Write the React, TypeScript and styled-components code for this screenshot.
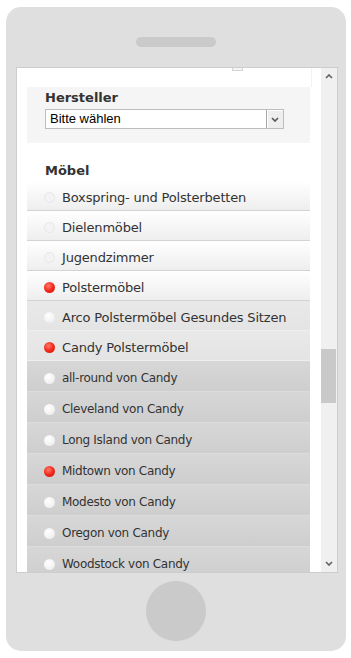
import styled, { createGlobalStyle, css } from 'styled-components';

/* ─── Data ─────────────────────────────────────── */

type Tone = 'light' | 'mid' | 'sub';
type DotKind = 'faint' | 'plain' | 'active';

interface Category {
  label: string;
  tone: Tone;
  dot: DotKind;
}

const CATEGORIES: Category[] = [
  { label: 'Boxspring- und Polsterbetten', tone: 'light', dot: 'faint' },
  { label: 'Dielenmöbel', tone: 'light', dot: 'faint' },
  { label: 'Jugendzimmer', tone: 'light', dot: 'faint' },
  { label: 'Polstermöbel', tone: 'light', dot: 'active' },
  { label: 'Arco Polstermöbel Gesundes Sitzen', tone: 'mid', dot: 'plain' },
  { label: 'Candy Polstermöbel', tone: 'mid', dot: 'active' },
  { label: 'all-round von Candy', tone: 'sub', dot: 'plain' },
  { label: 'Cleveland von Candy', tone: 'sub', dot: 'plain' },
  { label: 'Long Island von Candy', tone: 'sub', dot: 'plain' },
  { label: 'Midtown von Candy', tone: 'sub', dot: 'active' },
  { label: 'Modesto von Candy', tone: 'sub', dot: 'plain' },
  { label: 'Oregon von Candy', tone: 'sub', dot: 'plain' },
  { label: 'Woodstock von Candy', tone: 'sub', dot: 'plain' },
];

const THUMB_OFFSET = 264;

/* ─── Styled components ───────────────────────── */

const GlobalStyle = createGlobalStyle`
  html, body {
    margin: 0;
    padding: 0;
    background: #ffffff;
  }
  body {
    font-family: "DejaVu Sans", Verdana, sans-serif;
    color: #333333;
  }
`;

const Phone = styled.div`
  box-sizing: border-box;
  width: 340px;
  height: 644px;
  margin: 7px 0 0 6px;
  padding-top: 30px;
  background: #dfdfdf;
  border-radius: 15px;
  display: flex;
  flex-direction: column;
  align-items: center;
`;

const Speaker = styled.div`
  width: 80px;
  height: 10px;
  border-radius: 5px;
  background: #cacaca;
`;

const Screen = styled.div`
  box-sizing: border-box;
  align-self: flex-start;
  margin: 20px 0 0 10px;
  width: 322px;
  height: 506px;
  border: 1px solid #cdcdcd;
  background: #ffffff;
  display: flex;
`;

const Viewport = styled.div`
  flex: 1;
  min-width: 0;
  overflow: hidden;
  padding: 0 11px 0 10px;
`;

const Column = styled.div`
  display: flex;
  flex-direction: column;
`;

const TopStrip = styled.div`
  height: 19px;
  margin-right: -2px;
  border-right: 1px solid #f3f3f3;
`;

const TabEdge = styled.div`
  box-sizing: border-box;
  width: 11px;
  height: 3px;
  margin-left: 205px;
  background: #f4f4f4;
  border: 1px solid #d4d4d4;
  border-top: none;
`;

const FilterBox = styled.div`
  height: 56px;
  box-sizing: border-box;
  padding: 3px 18px 0;
  background: #f5f5f5;
`;

const Heading = styled.div`
  font-weight: bold;
  font-size: 13px;
  line-height: 16px;
  color: #333333;
`;

const SectionHeading = styled(Heading)`
  padding: 20px 18px 2px;
`;

const Select = styled.div`
  box-sizing: border-box;
  margin-top: 3px;
  width: 239px;
  height: 20px;
  display: flex;
  align-items: stretch;
  background: #ffffff;
  border: 1px solid #bdbdbd;
`;

const SelectValue = styled.div`
  flex: 1;
  padding-left: 4px;
  font-family: "Liberation Sans", Arial, sans-serif;
  font-size: 13px;
  line-height: 18px;
  color: #000000;
`;

const SelectButton = styled.div`
  width: 16px;
  display: flex;
  align-items: center;
  justify-content: center;
  background: #eeeeee;
  border-left: 1px solid #a8a8a8;
  box-shadow: inset 1px 1px 0 #ffffff;
`;

const toneStyles: Record<Tone, ReturnType<typeof css>> = {
  light: css`
    height: 30px;
    background: linear-gradient(#ffffff, #eeeeee);
    border-bottom: 1px solid #d3d3d3;
  `,
  mid: css`
    height: 30px;
    background: linear-gradient(#e9e9e9, #e4e4e4);
    border-bottom: 1px solid #eeeeee;
  `,
  sub: css`
    height: 31px;
    background: linear-gradient(#d7d7d7, #cecece);
    border-bottom: 1px solid #dcdcdc;
  `,
};

const Row = styled.div<{ $tone: Tone }>`
  box-sizing: border-box;
  display: flex;
  align-items: center;
  gap: 7px;
  padding: 4px 0 0 17px;
  ${({ $tone }) => toneStyles[$tone]}
`;

const dotStyles: Record<DotKind, ReturnType<typeof css>> = {
  faint: css`
    background: #f3f3f3;
    border: 1px solid #e7e7e7;
  `,
  plain: css`
    background: radial-gradient(circle at 40% 35%, #ffffff, #f3f3f3 55%, #e6e6e6);
  `,
  active: css`
    background: radial-gradient(circle at 40% 35%, #ff7a6a, #f22a1c 50%, #c81408);
  `,
};

const Dot = styled.span<{ $kind: DotKind }>`
  box-sizing: border-box;
  width: 11px;
  height: 11px;
  border-radius: 50%;
  flex-shrink: 0;
  ${({ $kind }) => dotStyles[$kind]}
`;

const Label = styled.span<{ $small: boolean }>`
  font-size: ${({ $small }) => ($small ? '12px' : '13px')};
  letter-spacing: ${({ $small }) => ($small ? '-0.3px' : '-0.18px')};
  line-height: 15px;
  color: #333333;
  white-space: nowrap;
`;

const Scrollbar = styled.div`
  width: 16px;
  display: flex;
  flex-direction: column;
  background: #f0f0f0;
`;

const ScrollArrow = styled.div`
  height: 17px;
  display: flex;
  align-items: center;
  justify-content: center;
`;

const Track = styled.div`
  flex: 1;
`;

const Thumb = styled.div`
  width: 15px;
  height: 54px;
  background: #c9c9c9;
`;

const HomeButton = styled.div`
  margin-top: 8px;
  width: 60px;
  height: 60px;
  border-radius: 50%;
  background: #cacaca;
`;

/* ─── Icons ────────────────────────────────────── */

function Chevron({ up, color = '#606060' }: { up?: boolean; color?: string }) {
  return (
    <svg width="8" height="5" viewBox="0 0 8 5">
      <path
        d={up ? 'M1 4 L4 1 L7 4' : 'M1 1 L4 4 L7 1'}
        fill="none"
        stroke={color}
        strokeWidth="1.6"
      />
    </svg>
  );
}

/* ─── App ─────────────────────────────────────── */

export default function App() {
  return (
    <>
      <GlobalStyle />
      <Phone>
        <Speaker />
        <Screen>
          <Viewport>
            <Column>
              <TopStrip>
                <TabEdge />
              </TopStrip>
              <FilterBox>
                <Heading>Hersteller</Heading>
                <Select>
                  <SelectValue>Bitte wählen</SelectValue>
                  <SelectButton>
                    <Chevron color="#555" />
                  </SelectButton>
                </Select>
              </FilterBox>
              <SectionHeading>Möbel</SectionHeading>
              {CATEGORIES.map(cat => (
                <Row key={cat.label} $tone={cat.tone}>
                  <Dot $kind={cat.dot} />
                  <Label $small={cat.tone === 'sub'}>{cat.label}</Label>
                </Row>
              ))}
            </Column>
          </Viewport>
          <Scrollbar>
            <ScrollArrow>
              <Chevron up />
            </ScrollArrow>
            <Track>
              <Thumb style={{ marginTop: THUMB_OFFSET }} />
            </Track>
            <ScrollArrow>
              <Chevron />
            </ScrollArrow>
          </Scrollbar>
        </Screen>
        <HomeButton />
      </Phone>
    </>
  );
}
